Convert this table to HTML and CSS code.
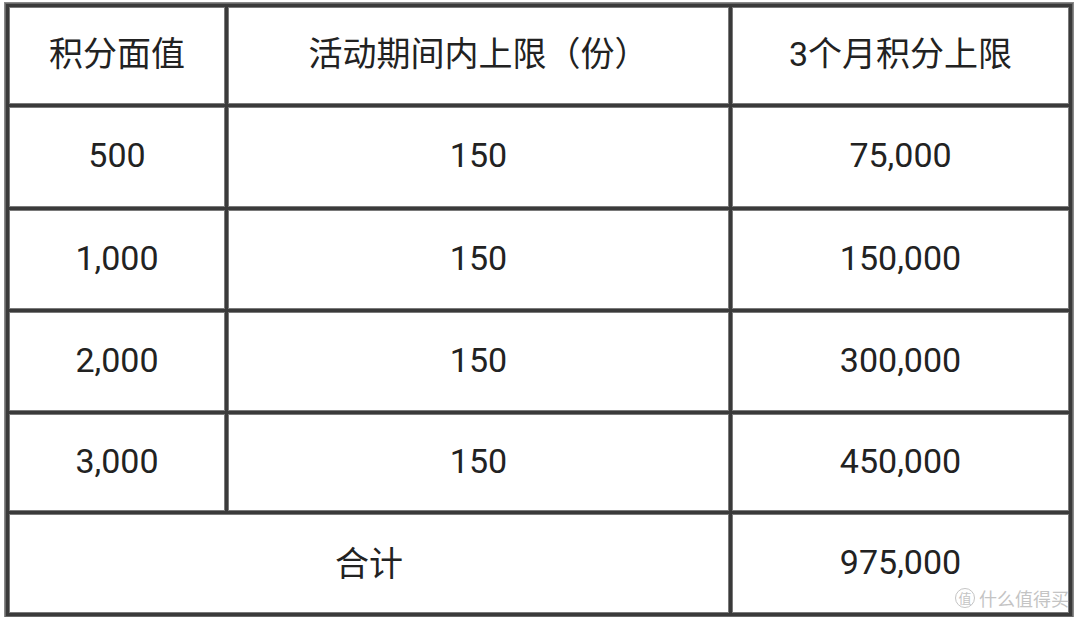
FILE: index.html
```html
<!DOCTYPE html>
<html lang="zh-CN">
<head>
<meta charset="utf-8">
<title>积分上限</title>
<link rel="stylesheet" href="styles.css">
</head>
<body>
<div class="page">
  <div class="grid">
    <div class="cell head">积分面值</div>
    <div class="cell head">活动期间内上限（份）</div>
    <div class="cell head">3个月积分上限</div>

    <div class="cell">500</div>
    <div class="cell">150</div>
    <div class="cell">75,000</div>

    <div class="cell">1,000</div>
    <div class="cell">150</div>
    <div class="cell">150,000</div>

    <div class="cell">2,000</div>
    <div class="cell">150</div>
    <div class="cell">300,000</div>

    <div class="cell">3,000</div>
    <div class="cell">150</div>
    <div class="cell">450,000</div>

    <div class="cell span2">合计</div>
    <div class="cell">975,000</div>
  </div>
  <div class="watermark"><span class="badge">值</span><span class="brand">什么值得买</span></div>
</div>
</body>
</html>
```

FILE: styles.css
```css
html, body {
  margin: 0;
  padding: 0;
  background: #ffffff;
}

.page {
  position: relative;
  width: 1080px;
  height: 617px;
  overflow: hidden;
  padding: 3px 0 0 5px;
  box-sizing: border-box;
}

.grid {
  display: grid;
  grid-template-columns: 214px 499px 335px;
  grid-template-rows: 95px 98px 97px 97px 95px 97px;
  gap: 5px;
  padding: 5px;
  width: max-content;
  background: #3a3a3a;
  box-shadow: 0 0 0 1px #8a8a8a, inset 0 0 0 1px #6a6a6a;
}

.cell {
  background: #ffffff;
  display: flex;
  align-items: center;
  justify-content: center;
  font-family: Roboto, "Noto Sans CJK SC", sans-serif;
  font-size: 34px;
  color: #222222;
  box-shadow: 0 0 0 1px #7a7a7a;
  padding-bottom: 4px;
  box-sizing: border-box;
}

.head {
  font-size: 34px;
  padding-bottom: 8px;
}

.span2 {
  grid-column: span 2;
}

.watermark {
  position: absolute;
  left: 955px;
  top: 585px;
  display: flex;
  align-items: center;
  gap: 4px;
  color: #c4c4c4;
  font-family: "Noto Sans CJK SC", sans-serif;
}

.badge {
  width: 18px;
  height: 18px;
  border: 1.5px solid #c4c4c4;
  border-radius: 50%;
  font-size: 13px;
  line-height: 18px;
  text-align: center;
}

.brand {
  font-size: 18px;
  letter-spacing: 0px;
}
```
